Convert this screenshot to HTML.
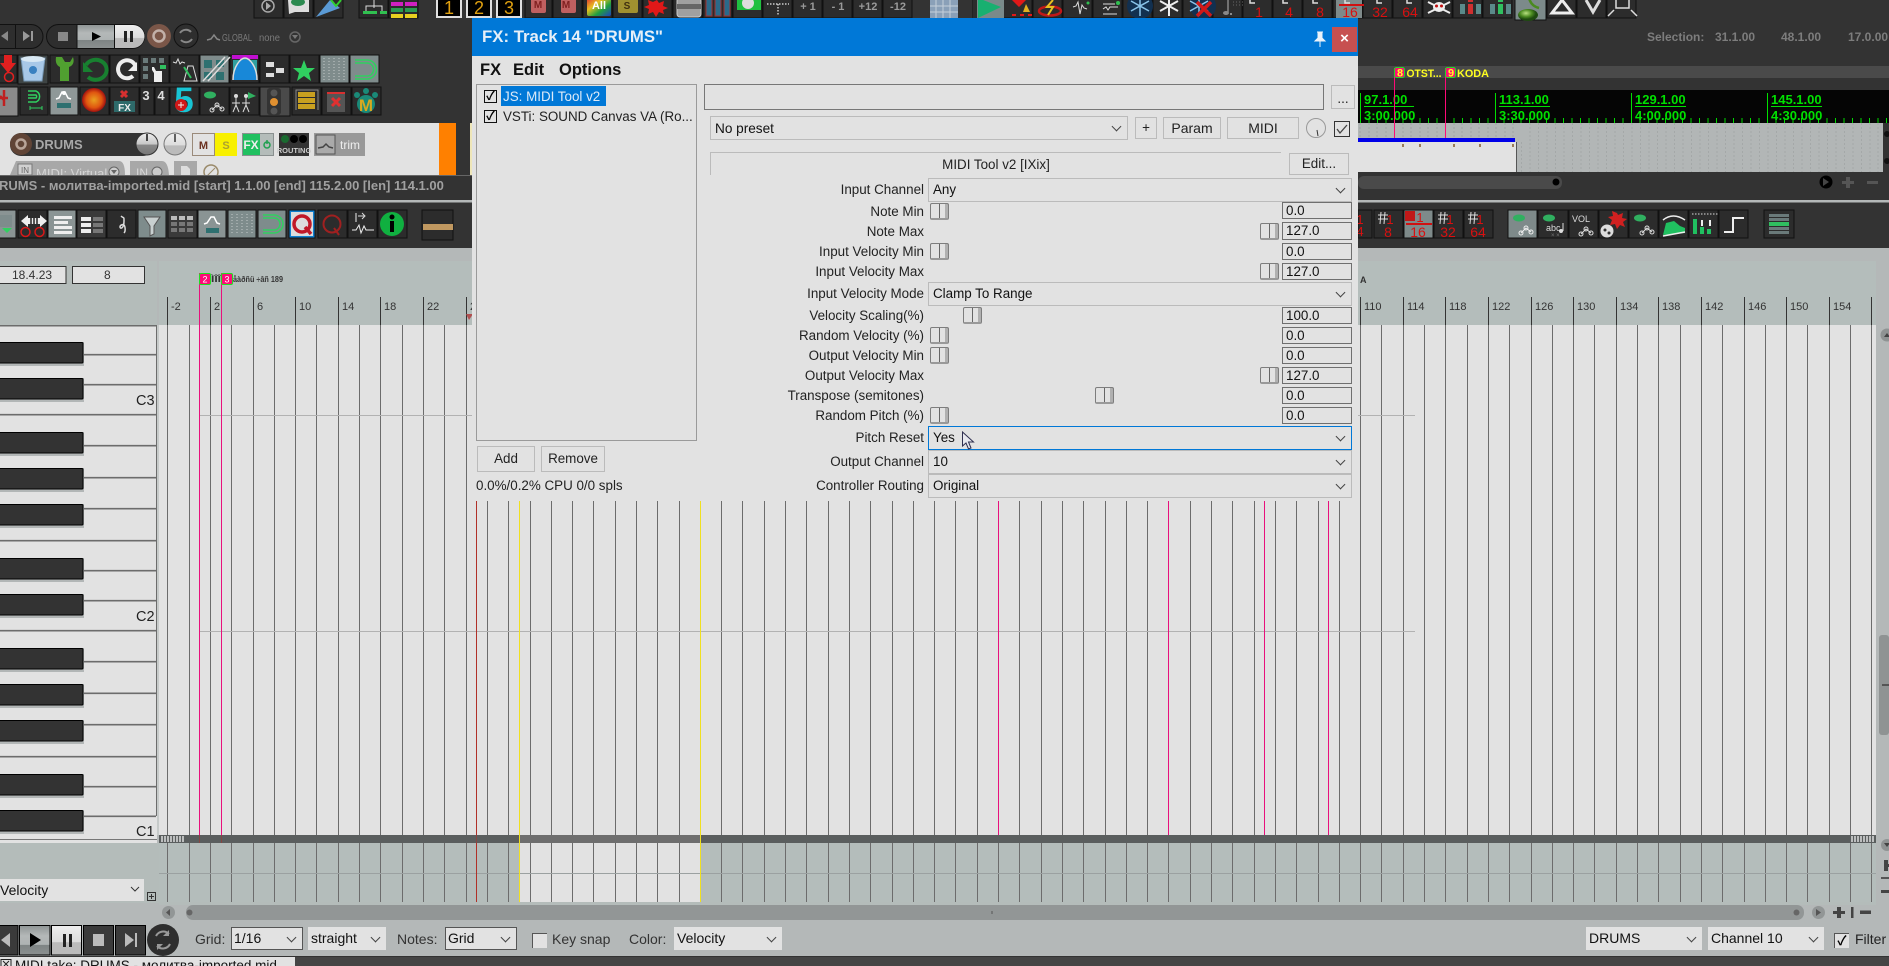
<!DOCTYPE html>
<html><head><meta charset="utf-8"><title>FX: Track 14 "DRUMS"</title>
<style>
html,body{margin:0;padding:0;width:1889px;height:966px;overflow:hidden;background:#333;font-family:"Liberation Sans","Noto Sans CJK SC",sans-serif}
.a,.cb,.ed,.kn,.bt,.lb,.s{position:absolute;box-sizing:border-box}
#base{position:absolute;left:0;top:0}
#base text{font-family:"Liberation Sans",sans-serif}
#dlg{position:absolute;left:472px;top:18px;width:886px;height:483px;background:#e2e2e2;color:#111;font-size:13.4px}
#dlg>*{margin-left:-472px;margin-top:-18px}
.lb{left:700px;width:224px;text-align:right;height:17px;line-height:17px;white-space:nowrap;color:#222}
.cb{border:1px solid #bbb;background:#e2e2e2;padding-left:4px;white-space:nowrap;border-width:1.5px}
.cb i,.s i{position:absolute;right:7px;top:50%;width:6px;height:6px;margin-top:-5px;border-right:1px solid #444;border-bottom:1px solid #444;transform:rotate(45deg)}
.ed{left:1282px;width:70px;height:17px;border:1px solid #6f6f6f;line-height:16px;padding-left:3px;background:#e2e2e2}
.kn{width:19px;height:17px;border:1px solid #7d7d7d;border-bottom:2px solid #999;border-radius:2px;background:linear-gradient(90deg,#e2e2e2 0,#e2e2e2 48%,#666 48%,#666 54%,#e2e2e2 54%,#e2e2e2 82%,#b0b0b0 82%)}
.bt{border:1px solid #bbb;text-align:center;background:#e2e2e2;color:#222;border-width:1.5px}
.chk{position:absolute;width:13px;height:13px;border:1.5px solid #111;box-sizing:border-box;background:#e2e2e2;font-size:12px;line-height:10px;text-align:center;font-weight:bold;color:#000}
.s{background:#e2e2e2;font-size:14px;line-height:22px;padding-left:3px;height:23px;top:927px;color:#111;white-space:nowrap}
.s.b{border:1px solid #555;line-height:20px;padding-left:2px}
.t{position:absolute;font-size:14px;color:#333;top:931px;white-space:nowrap;line-height:17px}
</style></head><body>
<svg id="base" width="1889" height="966" viewBox="0 0 1889 966" xmlns="http://www.w3.org/2000/svg">
<defs>
<linearGradient id="gp" x1="0" y1="0" x2="0" y2="1"><stop offset="0" stop-color="#8f9595"/><stop offset=".35" stop-color="#b4b8b8"/><stop offset=".65" stop-color="#aeb3b3"/><stop offset=".66" stop-color="#7e8484"/><stop offset="1" stop-color="#8b9090"/></linearGradient>
<linearGradient id="gk" x1="0" y1="0" x2="0" y2="1"><stop offset="0" stop-color="#eee"/><stop offset=".5" stop-color="#c8c8c8"/><stop offset=".55" stop-color="#888"/><stop offset="1" stop-color="#777"/></linearGradient>
<linearGradient id="gk2" x1="0" y1="0" x2="0" y2="1"><stop offset="0" stop-color="#eee"/><stop offset=".55" stop-color="#ddd"/><stop offset=".58" stop-color="#bbb"/><stop offset="1" stop-color="#bbb"/></linearGradient>
<radialGradient id="gsun"><stop offset="0" stop-color="#e8a020"/><stop offset=".65" stop-color="#e05510"/><stop offset="1" stop-color="#a01010"/></radialGradient>
<radialGradient id="gnote" cx=".4" cy=".35"><stop offset="0" stop-color="#b8e080"/><stop offset=".6" stop-color="#4a8a20"/><stop offset="1" stop-color="#1e4a10"/></radialGradient>
<linearGradient id="grb" x1="0" y1="0" x2="1" y2="1"><stop offset="0" stop-color="#e03030"/><stop offset=".35" stop-color="#e8c020"/><stop offset=".65" stop-color="#20a040"/><stop offset="1" stop-color="#2040c0"/></linearGradient>
<path id="g" fill="none" stroke="#6c6c6c" d="M167.5 0V510M189.5 0V510M210.5 0V510M231.5 0V510M253.5 0V510M274.5 0V510M295.5 0V510M316.5 0V510M338.5 0V510M359.5 0V510M380.5 0V510M402.5 0V510M423.5 0V510M444.5 0V510M466.5 0V510M487.5 0V510M508.5 0V510M530.5 0V510M551.5 0V510M572.5 0V510M593.5 0V510M615.5 0V510M636.5 0V510M657.5 0V510M679.5 0V510M700.5 0V510M721.5 0V510M742.5 0V510M764.5 0V510M785.5 0V510M806.5 0V510M828.5 0V510M849.5 0V510M870.5 0V510M892.5 0V510M913.5 0V510M934.5 0V510M955.5 0V510M977.5 0V510M998.5 0V510M1019.5 0V510M1041.5 0V510M1062.5 0V510M1083.5 0V510M1105.5 0V510M1126.5 0V510M1147.5 0V510M1168.5 0V510M1190.5 0V510M1211.5 0V510M1232.5 0V510M1254.5 0V510M1275.5 0V510M1296.5 0V510M1318.5 0V510M1339.5 0V510M1360.5 0V510M1381.5 0V510M1403.5 0V510M1424.5 0V510M1445.5 0V510M1467.5 0V510M1488.5 0V510M1509.5 0V510M1531.5 0V510M1552.5 0V510M1573.5 0V510M1594.5 0V510M1616.5 0V510M1637.5 0V510M1658.5 0V510M1680.5 0V510M1701.5 0V510M1722.5 0V510M1744.5 0V510M1765.5 0V510M1786.5 0V510M1807.5 0V510M1829.5 0V510M1850.5 0V510M1871.5 0V510"/>
</defs>
<!-- backgrounds -->
<rect width="1889" height="966" fill="#333"/>
<rect y="123" width="439" height="52" fill="#e2e2e2"/>
<rect x="439" y="123" width="17" height="52" fill="#ff8000"/>
<rect x="470" y="123" width="2" height="52" fill="#eee6b8"/>
<!-- arrange right -->
<rect x="1358" y="66" width="531" height="12" fill="#4a4a4a"/>
<rect x="1358" y="90" width="531" height="33" fill="#050505"/>
<rect x="1358" y="123" width="525" height="49" fill="#b2b6b6"/>
<rect x="1358" y="142" width="158" height="30" fill="#e2e2e2"/>
<rect x="1516" y="142" width="1" height="30" fill="#555"/>
<rect x="1358" y="138" width="157" height="4" fill="#0000e8"/>
<path d="M1360 123V138M1369 123V138M1377 123V138M1386 123V138M1403 123V138M1411 123V138M1420 123V138M1428 123V138M1437 123V138M1454 123V138M1462 123V138M1471 123V138M1479 123V138M1488 123V138M1496 123V138M1505 123V138M1513 123V138" stroke="#a0a4a4" stroke-dasharray="2 2"/>
<path d="M1521.500 142V172M1530 123V172M1538.500 123V172M1547 123V172M1555.500 123V172M1564 123V172M1572.500 123V172M1581 123V172M1589.500 123V172M1598 123V172M1606.500 123V172M1615 123V172M1623.500 123V172M1632 123V172M1640.500 123V172M1649 123V172M1657.500 123V172M1666 123V172M1674.500 123V172M1683 123V172M1691.500 123V172M1700 123V172M1708.500 123V172M1717 123V172M1725.500 123V172M1734 123V172M1742.500 123V172M1751 123V172M1759.500 123V172M1768 123V172M1776.500 123V172M1785 123V172M1793.500 123V172M1802 123V172M1810.500 123V172M1819 123V172M1827.500 123V172M1836 123V172M1844.500 123V172M1853 123V172M1861.500 123V172M1870 123V172M1878 123V172" stroke="#a4a8a8" stroke-dasharray="2 2"/>
<path d="M1402 144h2v3h-2zM1419 144h2v3h-2zM1453 144h2v3h-2zM1479 144h2v3h-2zM1512 144h2v3h-2z" fill="#9a7a58"/>
<circle cx="1887" cy="134" r="3" fill="#111"/><circle cx="1887" cy="161" r="3" fill="#111"/>
<rect x="1358" y="176" width="204" height="13" rx="6" fill="#4a4a4a"/>
<circle cx="1556" cy="182" r="3.500" fill="#000"/>
<circle cx="1826" cy="182" r="6.500" fill="#000"/><path d="M1823 178l6 4-6 4z" fill="#444"/>
<path d="M1846 177h4v4h4v3h-4v4h-4v-4h-4v-3h4z" fill="#555"/>
<rect x="1867" y="181" width="11" height="3" fill="#555"/>
<!-- ruler arrange -->
<path d="M1360.500 93V123M1495.500 93V123M1631.500 93V123M1767.500 93V123" stroke="#00e000"/>
<path d="M1369 118V123M1377.500 118V123M1386 118V123M1403 118V123M1412 118V123M1420 118V123M1428.500 118V123M1437 118V123M1445.500 118V123M1454 118V123M1462.500 118V123M1471 118V123M1479.500 118V123M1488 118V123M1504 118V123M1512.500 118V123M1521 118V123M1529.500 118V123M1538 118V123M1546.500 118V123M1555 118V123M1563.500 118V123M1572 118V123M1580.500 118V123M1589 118V123M1597.500 118V123M1606 118V123M1614.500 118V123M1623 118V123M1640 118V123M1648.500 118V123M1657 118V123M1665.500 118V123M1674 118V123M1682.500 118V123M1691 118V123M1699.500 118V123M1708 118V123M1716.500 118V123M1725 118V123M1733.500 118V123M1742 118V123M1750.500 118V123M1759 118V123M1776 118V123M1784.500 118V123M1793 118V123M1801.500 118V123M1810 118V123M1818.500 118V123M1827 118V123M1835.500 118V123M1844 118V123M1852.500 118V123M1861 118V123M1869.500 118V123M1878 118V123M1886.500 118V123" stroke="#00d800"/>
<g fill="#00e000" font-size="13" font-weight="bold">
<text x="1364" y="104">97.1.00</text><text x="1499" y="104">113.1.00</text><text x="1635" y="104">129.1.00</text><text x="1771" y="104">145.1.00</text>
<text x="1364" y="120">3:00.000</text><text x="1499" y="120">3:30.000</text><text x="1635" y="120">4:00.000</text><text x="1771" y="120">4:30.000</text></g>
<path d="M1364 106.500h50M1499 106.500h51M1635 106.500h51M1771 106.500h51" stroke="#00e000"/>
<!-- markers top -->
<path d="M1394.500 68V138M1445.500 68V138" stroke="#ff0a78"/>
<rect x="1394.500" y="67.500" width="10" height="10" rx="2" fill="#ff0a78" stroke="#20e020"/><rect x="1445.500" y="67.500" width="10" height="10" rx="2" fill="#ff0a78" stroke="#20e020"/>
<g font-size="11" font-weight="bold" fill="#ffff20"><text x="1397" y="76.500">8</text><text x="1448" y="76.500">9</text><text x="1406.500" y="77" textLength="35" lengthAdjust="spacingAndGlyphs">OTST...</text><text x="1457" y="77" textLength="32" lengthAdjust="spacingAndGlyphs">KODA</text></g>
<g font-size="12" font-weight="bold" fill="#7d7d7d"><text x="1647" y="41">Selection:</text><text x="1715" y="41">31.1.00</text><text x="1781" y="41">48.1.00</text><text x="1848" y="41">17.0.00</text></g>
<!-- dividers -->
<rect y="175" width="472" height="1" fill="#555"/>
<rect y="200" width="1889" height="2.500" fill="#b4b8b8"/>
<!-- midi editor background -->
<rect y="248" width="1889" height="708" fill="#b4b8b8"/>
<rect y="261" width="157" height="65" fill="#b4bcba"/>
<rect x="159" y="261" width="1717" height="64" fill="#b4bdbb"/>
<rect y="843" width="159" height="60" fill="#b4bcba"/>
<rect x="159" y="325" width="1717" height="510" fill="#e2e2e2"/>
<rect x="159" y="843" width="1717" height="59" fill="#b4bdbb"/>
<rect x="519" y="843" width="181" height="59" fill="#e2e2e2"/>
<!-- grid -->
<svg x="0" y="325" width="1876" height="510" viewBox="0 0 1876 510"><use href="#g"/></svg>
<svg x="0" y="843" width="1876" height="59" viewBox="0 0 1876 59"><use href="#g" transform="scale(1 .116)"/></svg>
<path d="M199 415.500H1415M199 631.500H1415" stroke="#b2b2b2"/>
<path d="M159 873.500H1876" stroke="#9ba1a1"/>
<path d="M167.500 297V325M210.500 297V325M253.500 297V325M295.500 297V325M338.500 297V325M380.500 297V325M423.500 297V325M466.500 297V325M1360.500 297V325M1403.500 297V325M1445.500 297V325M1488.500 297V325M1531.500 297V325M1573.500 297V325M1616.500 297V325M1658.500 297V325M1701.500 297V325M1744.500 297V325M1786.500 297V325M1829.500 297V325M1871.500 297V325" stroke="#333"/>
<g font-size="11" fill="#333"><text x="171" y="310">-2</text><text x="214" y="310">2</text><text x="257" y="310">6</text><text x="299" y="310">10</text><text x="342" y="310">14</text><text x="384" y="310">18</text><text x="427" y="310">22</text><text x="470" y="310">2</text>
<text x="1364" y="310">110</text><text x="1407" y="310">114</text><text x="1449" y="310">118</text><text x="1492" y="310">122</text><text x="1535" y="310">126</text><text x="1577" y="310">130</text><text x="1620" y="310">134</text><text x="1662" y="310">138</text><text x="1705" y="310">142</text><text x="1748" y="310">146</text><text x="1790" y="310">150</text><text x="1833" y="310">154</text></g>
<text x="1360" y="283" font-size="9" font-weight="bold" fill="#333">A</text>
<path d="M466 314h7l-4 6z" fill="#b05050"/>
<!-- coloured lines -->
<path d="M199.500 273V835M221.500 273V835M998.500 501V835M1168.500 501V835M1264.500 501V835M1328.500 501V835" stroke="#e8107c"/>
<path d="M476.500 501V902" stroke="#b03028"/>
<rect x="159" y="835" width="1717" height="8" fill="#5a5e5e"/>
<rect x="519" y="835" width="181" height="8" fill="#6e6e6e"/>
<path d="M519.500 501V902M700.500 501V902" stroke="#f0e020"/>
<path d="M476.500 835V843M199.500 835V843M221.500 835V843" stroke="#b03028" opacity=".5"/>
<path d="M161 837h23M161 839h23M161 841h23M1851 837h23M1851 839h23M1851 841h23" stroke="#ddd" stroke-dasharray="2 1" stroke-width="1.500"/>
<g font-size="8.500" fill="#333" font-weight="bold"><text x="211" y="282" textLength="10" lengthAdjust="spacingAndGlyphs">ÌÎÎ</text><text x="233" y="282" textLength="50" lengthAdjust="spacingAndGlyphs">åàðñü ÷âñ 189</text></g>
<rect x="199.500" y="273.500" width="11" height="11" rx="1.500" fill="#ff0a78" stroke="#20e020"/><rect x="221.500" y="273.500" width="11" height="11" rx="1.500" fill="#ff0a78" stroke="#20e020"/>
<g font-size="9" fill="#fff"><text x="202.500" y="282.500">2</text><text x="224.500" y="282.500">3</text></g>
<!-- piano -->
<rect y="325" width="157" height="518" fill="#e2e2e2"/>
<rect y="325" width="157" height="1.500" fill="#6c6c6c"/>
<rect x="156" y="325" width="1.500" height="491" fill="#6c6c6c"/>
<rect x="157" y="325" width="2" height="510" fill="#c6cac9"/>
<path d="M0 354.700H156M0 384.700H156M0 414.700H156M0 445.700H156M0 477.700H156M0 508.700H156M0 540.700H156M0 570.700H156M0 600.700H156M0 630.700H156M0 661.700H156M0 693.300H156M0 724.700H156M0 756.700H156M0 786.700H156M0 816.300H156" stroke="#6c6c6c" stroke-width="1.600"/>
<path d="M0 839.500H157" stroke="#777"/>
<rect y="843" width="159" height="2" fill="#b4bcba"/>
<g fill="#b2b6b6"><rect y="342" width="84" height="24"/><rect y="378" width="84" height="24"/><rect y="432" width="84" height="24"/><rect y="468" width="84" height="24"/><rect y="504" width="84" height="24"/><rect y="558" width="84" height="24"/><rect y="594" width="84" height="24"/><rect y="648" width="84" height="24"/><rect y="684" width="84" height="24"/><rect y="720" width="84" height="24"/><rect y="774" width="84" height="24"/><rect y="810" width="84" height="24"/></g>
<g fill="#333" stroke="#000"><rect x="-2" y="342.500" width="85" height="20.500" rx="1"/><rect x="-2" y="378.500" width="85" height="20.500" rx="1"/><rect x="-2" y="432.500" width="85" height="20.500" rx="1"/><rect x="-2" y="468.500" width="85" height="20.500" rx="1"/><rect x="-2" y="504.500" width="85" height="20.500" rx="1"/><rect x="-2" y="558.500" width="85" height="20.500" rx="1"/><rect x="-2" y="594.500" width="85" height="20.500" rx="1"/><rect x="-2" y="648.500" width="85" height="20.500" rx="1"/><rect x="-2" y="684.500" width="85" height="20.500" rx="1"/><rect x="-2" y="720.500" width="85" height="20.500" rx="1"/><rect x="-2" y="774.500" width="85" height="20.500" rx="1"/><rect x="-2" y="810.500" width="85" height="20.500" rx="1"/></g>
<g font-size="14.500" fill="#222"><text x="136" y="405">C3</text><text x="136" y="621">C2</text><text x="136" y="836">C1</text></g>
<!-- midi header inputs -->
<rect x="-2" y="266.500" width="68" height="17" fill="#e2e2e2" stroke="#333"/><rect x="72.500" y="266.500" width="72" height="17" fill="#e2e2e2" stroke="#333"/>
<g font-size="12" fill="#333"><text x="12" y="279">18.4.23</text><text x="104" y="279">8</text></g>
<!-- velocity dropdown -->
<rect y="879" width="144" height="22" fill="#e2e2e2"/><text x="0" y="895" font-size="14" fill="#111">Velocity</text>
<path d="M131 887l4 4 4-4" fill="none" stroke="#333"/>
<rect x="147.500" y="892.500" width="8" height="8" fill="none" stroke="#333"/><path d="M149 896.500h5M151.500 894v5" stroke="#333"/>
<!-- horizontal scrollbar -->
<rect x="159" y="902" width="1717" height="3" fill="#b4bcba"/>
<rect x="186" y="905" width="1618" height="15" rx="7" fill="#929696"/>
<circle cx="168.500" cy="912.500" r="6.500" fill="#929696"/><path d="M170 909v7l-4-3.500z" fill="#555"/>
<circle cx="189.500" cy="912.500" r="3" fill="#666"/>
<circle cx="1796.500" cy="912.500" r="3" fill="#666"/>
<circle cx="1818.500" cy="912.500" r="6.500" fill="#929696"/><path d="M1816 909v7l5-3.500z" fill="#555"/>
<path d="M1837 907h4v4h4v3h-4v4h-4v-4h-4v-3h4z" fill="#444"/><rect x="1851" y="907" width="2.500" height="11" fill="#444"/><rect x="1860" y="910.500" width="11" height="3.500" fill="#444"/>
<path d="M992 911V914" stroke="#555"/>
<!-- right strip -->
<circle cx="1887" cy="335" r="6.500" fill="#8f9393"/><path d="M1884 337l3-4 3 4z" fill="#444"/>
<rect x="1879" y="635" width="10" height="100" rx="3" fill="#8f9393"/><rect x="1882" y="684" width="7" height="2" fill="#555"/>
<circle cx="1887" cy="845" r="6" fill="#8f9393"/><path d="M1884 843l3 4 3-4z" fill="#444"/>
<path d="M1884 860h4v4h1v3h-1v4h-4z" fill="#444"/><rect x="1881" y="877" width="8" height="2" fill="#555"/><rect x="1881" y="890" width="8" height="3" fill="#444"/>
<!-- bottom transport -->
<g stroke="#000"><rect x="-2" y="925.500" width="20" height="29.500" fill="#3a3a3a"/><rect x="19.500" y="925.500" width="30.500" height="29.500" fill="url(#gp)"/><rect x="51.500" y="925.500" width="30" height="29.500" fill="url(#gk2)"/><rect x="83.500" y="925.500" width="30" height="29.500" fill="#3a3a3a"/><rect x="115.500" y="925.500" width="30" height="29.500" fill="#3a3a3a"/></g>
<path d="M10 933v14l-9-7z" fill="#bbb"/><path d="M30 933l11 7-11 7z" fill="#000"/><path d="M63 934h3v13h-3zM69 934h3v13h-3z" fill="#222"/><rect x="93" y="934" width="11" height="12" fill="#bbb"/><path d="M125 933l9 7-9 7zM135 933h2v14h-2z" fill="#bbb"/>
<circle cx="163" cy="940" r="16" fill="#2e2e2e"/><path d="M156 936a8 8 0 0 1 13-2M170 944a8 8 0 0 1-13 2" fill="none" stroke="#999" stroke-width="2"/><path d="M169 930v6h-6zM157 950v-6h6z" fill="#999"/>
<!-- bottom status -->
<rect y="957" width="1889" height="9" fill="#454545"/>
<rect y="957" width="295" height="9" fill="#e2e2e2"/>
<path d="M1 966V959.500H11V966" fill="none" stroke="#222"/><path d="M3 961l5 5M9 961l-5 5" stroke="#222"/>

<!-- TOP TOOLBAR ROW 0 -->
<g fill="#2c2c2c" stroke="#111"><rect x="254" y="-2" width="29" height="20"/><rect x="284" y="-2" width="29" height="20"/><rect x="314" y="-2" width="29" height="20"/><rect x="359" y="-2" width="29" height="20"/><rect x="389" y="-2" width="29" height="20"/>
<rect x="525" y="-2" width="27" height="20"/><rect x="553" y="-2" width="29" height="20"/><rect x="583" y="-2" width="29" height="20"/><rect x="613" y="-2" width="29" height="20"/><rect x="643" y="-2" width="29" height="20"/><rect x="673" y="-2" width="29" height="20"/><rect x="703" y="-2" width="29" height="20"/><rect x="733" y="-2" width="29" height="20"/><rect x="763" y="-2" width="29" height="20"/><rect x="793" y="-2" width="29" height="20"/><rect x="823" y="-2" width="29" height="20"/><rect x="853" y="-2" width="29" height="20"/><rect x="883" y="-2" width="29" height="20"/><rect x="973" y="-2" width="29" height="20"/><rect x="1003" y="-2" width="29" height="20"/><rect x="1033" y="-2" width="29" height="20"/><rect x="1063" y="-2" width="29" height="20"/><rect x="1093" y="-2" width="29" height="20"/><rect x="1123" y="-2" width="29" height="20"/><rect x="1153" y="-2" width="29" height="20"/><rect x="1183" y="-2" width="29" height="20"/><rect x="1213" y="-2" width="29" height="20"/><rect x="1243" y="-2" width="29" height="20"/><rect x="1273" y="-2" width="29" height="20"/><rect x="1303" y="-2" width="29" height="20"/><rect x="1333" y="-2" width="29" height="20"/><rect x="1363" y="-2" width="29" height="20"/><rect x="1393" y="-2" width="29" height="20"/><rect x="1423" y="-2" width="29" height="20"/><rect x="1453" y="-2" width="29" height="20"/><rect x="1483" y="-2" width="29" height="20"/><rect x="1515" y="-2" width="31" height="20"/><rect x="1547" y="-2" width="29" height="20"/><rect x="1577" y="-2" width="29" height="20"/><rect x="1607" y="-2" width="29" height="20"/></g>
<circle cx="268" cy="6" r="6" fill="none" stroke="#aaa" stroke-width="1.500"/><path d="M266 2l5 4-5 4z" fill="#aaa"/>
<path d="M288 0h21v12h-14l-6 2z" fill="#ddd"/><ellipse cx="298" cy="2" rx="7" ry="4" fill="#2c8a50"/>
<path d="M316 17l24-9-10-8z" fill="#5a9ad5"/><path d="M331 0l5 6 5-6" fill="none" stroke="#30d030" stroke-width="2"/>
<rect x="363" y="11" width="7" height="3" fill="#30c050"/><rect x="370" y="11" width="7" height="3" fill="#30c050"/><rect x="380" y="11" width="7" height="3" fill="#30c050"/><path d="M374 0v8M366 11V6h16v5" stroke="#ddd" fill="none"/>
<g fill="#d020c0"><rect x="391" y="2" width="12" height="4"/><rect x="405" y="2" width="12" height="4"/></g><g fill="#2a9a50"><rect x="391" y="8" width="12" height="4"/><rect x="405" y="8" width="12" height="4"/></g><g fill="#e8d020"><rect x="391" y="14" width="12" height="4"/><rect x="405" y="14" width="12" height="4"/></g>
<g fill="#000" stroke="#e0e0e0" stroke-width="2"><rect x="437" y="-2" width="24" height="19"/><rect x="467" y="-2" width="24" height="19"/><rect x="497" y="-2" width="24" height="19"/></g>
<g font-size="18" fill="#e0a010" text-anchor="middle"><text x="449" y="14">1</text><text x="479" y="14">2</text><text x="509" y="14">3</text></g>
<rect x="531" y="-2" width="15" height="15" rx="2" fill="#c06060"/><rect x="561" y="-2" width="15" height="15" rx="2" fill="#c06060"/><rect x="618" y="-2" width="20" height="15" rx="2" fill="#a09030"/>
<rect x="587" y="-2" width="24" height="18" rx="2" fill="url(#grb)"/>
<g font-size="10" font-weight="bold" text-anchor="middle"><text x="538" y="8" fill="#802020">M</text><text x="566" y="8" fill="#802020">M</text><text x="627" y="9" fill="#403010">S</text><text x="599" y="9" fill="#fff" font-size="11">All</text></g>
<path d="M657 0l2 3 5-2-1 5 5 2-5 2 1 4-5-2-3 5-3-5-5 2 1-5-5-2 5-2-1-5 5 2z" fill="#e01818"/>
<rect x="677" y="-2" width="24" height="19" rx="3" fill="#a0a0a0" stroke="#ccc"/><rect x="677" y="4" width="24" height="5" fill="#666"/>
<g fill="#2a6a8a" stroke="#a03030"><rect x="706" y="-2" width="6" height="18"/><rect x="715" y="-2" width="6" height="18"/><rect x="724" y="-2" width="6" height="18"/></g>
<rect x="737" y="-2" width="24" height="12" fill="#20c040"/><circle cx="748" cy="3" r="6" fill="#ddd"/>
<path d="M767 4h22M778 4v11" stroke="#ccc" stroke-dasharray="1.500 1.500" stroke-width="1.500"/>
<g font-size="11" fill="#9a9a9a" text-anchor="middle" font-weight="bold"><text x="808" y="10">+ 1</text><text x="838" y="10">- 1</text><text x="868" y="10">+12</text><text x="898" y="10">-12</text></g>
<rect x="930" y="-2" width="28" height="20" fill="#8aa0b8"/>
<path d="M936 0v18M943 0v18M950 0v18M930 6h28M930 12h28" stroke="#c4cfda"/>
<rect x="973" y="-2" width="29" height="20" fill="#2c2c2c"/><rect x="977" y="-2" width="27" height="20" fill="#7a8a8a"/><path d="M978 18V-2l23 9z" fill="#18b070"/>
<path d="M1012 0l7 7 7-7zM1012 14h4v2h-4zM1020 14h4v2h-4zM1028 14h4v2h-4z" fill="#e01818"/><path d="M1026 4l4 8h-7z" fill="#e0b020"/>
<ellipse cx="1050" cy="11" rx="11" ry="4.500" fill="none" stroke="#c01818" stroke-width="2.500"/><path d="M1053 0l-6 7h6l-5 8" fill="none" stroke="#e8c020" stroke-width="2"/>
<path d="M1073 7l3-1 2-4 2 12 2-9 2 3 3 1" fill="none" stroke="#ddd"/><circle cx="1088" cy="3" r="1.500" fill="#30c050"/>
<path d="M1103 4h12M1103 9l3-2 2 3 2-3 8 0M1103 14h14" fill="none" stroke="#ddd"/><circle cx="1118" cy="3" r="2" fill="#30c050"/>
<circle cx="1140" cy="6" r="13" fill="#123050"/><circle cx="1203" cy="6" r="13" fill="#123050"/>
<g stroke="#8ac4ea" stroke-width="1.500"><path d="M1140 -4v20M1131 1l18 10M1149 1l-18 10"/><path d="M1199 -4v20M1190 1l18 10M1208 1l-18 10"/></g>
<path d="M1169 -4v20M1160 1l18 10M1178 1l-18 10" stroke="#eee" stroke-width="2"/>
<path d="M1197 2l14 14M1211 2l-14 14" stroke="#d01818" stroke-width="3.500"/>
<path d="M1228 0v12" stroke="#888" stroke-width="1.500"/><ellipse cx="1226" cy="13" rx="3" ry="2" fill="#888"/><circle cx="1231" cy="14" r="1" fill="#aaa"/><path d="M1233 2h10M1233 5h10" stroke="#666" stroke-dasharray="1 2"/>
<rect x="1336" y="-2" width="26" height="20" fill="#7e8a8a"/>
<path d="M1339 5h25" stroke="#d01010" stroke-width="2"/>
<path d="M1250 0v3h5M1283 0v3h5M1313 0v3h5M1345 0v3h5M1377 0v3h5M1407 0v3h5" stroke="#ddd" stroke-width="1.500" fill="none"/>
<g font-size="14" fill="#d81010" text-anchor="middle"><text x="1259" y="17">1</text><text x="1289" y="17">4</text><text x="1320" y="17">8</text><text x="1350" y="17">16</text><text x="1380" y="17">32</text><text x="1410" y="17">64</text></g>
<ellipse cx="1439" cy="7" rx="6" ry="5" fill="#eee"/><path d="M1428 2l22 11M1450 2l-22 11" stroke="#eee" stroke-width="2"/><circle cx="1436.500" cy="6" r="1.500" fill="#c01010"/><circle cx="1441.500" cy="6" r="1.500" fill="#c01010"/>
<g fill="#5a8a8a"><rect x="1460" y="4" width="5" height="10"/><rect x="1476" y="4" width="5" height="10"/><rect x="1490" y="4" width="5" height="10"/><rect x="1506" y="4" width="5" height="10"/></g><rect x="1468" y="4" width="5" height="10" fill="#d03030"/><rect x="1498" y="4" width="5" height="10" fill="#30c060"/><rect x="1468" y="0" width="5" height="2" fill="#d03030"/><rect x="1498" y="0" width="5" height="2" fill="#30c060"/>
<rect x="1515" y="-2" width="31" height="22" fill="#7c8a8a" stroke="#111"/><ellipse cx="1528" cy="15" rx="10" ry="6" fill="url(#gnote)"/><path d="M1529 -2q2 8 10 10" fill="none" stroke="#4a8a20" stroke-width="2.500"/>
<path d="M1562 0l-10 13h20zM1562 0l-6 8" fill="none" stroke="#eee" stroke-width="3"/>
<path d="M1586 0l7 12 7-12" fill="none" stroke="#ddd" stroke-width="3"/>
<rect x="1616" y="-2" width="13" height="10" fill="none" stroke="#ddd" stroke-width="1.500"/><path d="M1614 10l-6 6M1631 10l6 6" stroke="#ddd" stroke-width="1.500"/>

<!-- transport -->
<rect x="-14" y="24.500" width="57" height="24" rx="12" fill="#2e2e2e" stroke="#111"/>
<path d="M8 31v10l-7-5z" fill="#888"/><path d="M23 31l7 5-7 5zM31 31h2v10h-2z" fill="#999"/><path d="M15.500 25v23" stroke="#111"/>
<rect x="46.500" y="24.500" width="98" height="24" rx="12" fill="#2e2e2e" stroke="#111"/>
<rect x="77" y="25" width="37" height="23" fill="url(#gp)"/>
<path d="M115 25h18a11.500 11.500 0 0 1 0 23h-18z" fill="url(#gk2)"/>
<path d="M77 25V48M114.500 25V48" stroke="#111"/>
<rect x="58" y="32" width="10" height="9" fill="#888"/><path d="M92 32l9 4.500-9 4.500z" fill="#000"/><path d="M124 31h3v11h-3zM130 31h3v11h-3z" fill="#222"/>
<circle cx="159" cy="36" r="12" fill="#7a5648"/><circle cx="159" cy="36" r="5.500" fill="none" stroke="#c2b0a8" stroke-width="2.500"/>
<circle cx="186" cy="36" r="12" fill="#2e2e2e" stroke="#111"/><path d="M180 33a7 7 0 0 1 11-1M192 39a7 7 0 0 1-11 1" fill="none" stroke="#888" stroke-width="2"/>
<path d="M207 40l4-1 3-4 3 4 3 1" fill="none" stroke="#888" stroke-width="1.500"/>
<g font-size="10" fill="#7a7a7a"><text x="222" y="41" textLength="30" lengthAdjust="spacingAndGlyphs">GLOBAL</text><text x="259" y="41" textLength="21" lengthAdjust="spacingAndGlyphs">none</text></g>
<circle cx="295" cy="37" r="5" fill="none" stroke="#666" stroke-width="1.500"/><path d="M292 35h6l-3 4z" fill="#777"/>

<!-- ROW 1 -->
<g fill="#2c2c2c" stroke="#111"><rect x="-2" y="55" width="19" height="28"/><rect x="18" y="55" width="30" height="29" fill="#3e4444"/><rect x="50" y="55" width="29" height="28"/><rect x="80" y="55" width="29" height="28"/><rect x="110" y="55" width="29" height="28"/><rect x="140" y="55" width="29" height="28"/><rect x="170" y="55" width="29" height="28"/><rect x="200" y="55" width="29" height="28" fill="#7f8c8c"/><rect x="230" y="55" width="29" height="28"/><rect x="260" y="55" width="29" height="28"/><rect x="290" y="55" width="29" height="28"/><rect x="320" y="55" width="29" height="28" fill="#7f8c8c"/><rect x="350" y="55" width="29" height="28" fill="#7f8c8c"/></g>
<path d="M4 55h8v8h4l-8 10-8-10h4z" fill="#e02020"/><circle cx="9" cy="77" r="4.500" fill="none" stroke="#e02020" stroke-width="1.500"/>
<path d="M21 58h24l-3 23H24z" fill="#a8c8e8" stroke="#789ab8"/><ellipse cx="33" cy="59" rx="12" ry="3" fill="#d8e8f4"/><circle cx="33" cy="70" r="4" fill="#3a80c0"/>
<path d="M56 57c-1 7 2 9 4 10v14h9V67c3-1 6-4 4-10l-3 5-5 0-3-5z" fill="#50a030"/>
<path d="M86 65a11 10 0 1 1 2 12" fill="none" stroke="#188030" stroke-width="4"/><path d="M83 62v10h10z" fill="#188030"/>
<path d="M135 65a9 9 0 1 0-2 11" fill="none" stroke="#eee" stroke-width="4"/><path d="M137 62v9h-9z" fill="#eee"/>
<g fill="#6a7a7a"><rect x="143" y="58" width="5" height="5"/><rect x="151" y="58" width="5" height="5"/><rect x="159" y="58" width="5" height="5"/><rect x="143" y="66" width="5" height="5"/><rect x="143" y="74" width="5" height="5"/></g><rect x="160" y="65" width="6" height="4" fill="#30c060"/><path d="M154 82v-9l-2-3v-3h2l2 4h6v11z" fill="#eee"/>
<path d="M173 62l3 1 2-4 2 5 2-2 3 1" fill="none" stroke="#ddd"/><path d="M184 81h13l-4-15h-5z" fill="none" stroke="#ddd"/><path d="M184 67l7 11" stroke="#30c060" stroke-width="2"/>
<g fill="#2e7070"><rect x="204" y="60" width="8" height="8"/><rect x="216" y="72" width="8" height="8"/><rect x="204" y="72" width="8" height="7"/><rect x="216" y="60" width="8" height="7"/></g><path d="M203 81l22-24M208 81l22-24" stroke="#ddd" stroke-width="1.500"/>
<rect x="232" y="55" width="26" height="4" fill="#c010d0"/><path d="M233 80c0-14 8-22 12-22s12 8 12 22z" fill="#1888d8"/><path d="M233 60h24v20c-1-12-6-22-12-22s-11 10-12 22z" fill="#30a0a0"/><path d="M233 80c0-14 8-22 12-22s12 8 12 22" fill="none" stroke="#ddd" stroke-width="1.500"/>
<path d="M266 62h8v5h-8zM276 68h8v5h-8zM266 73h8v4h-8z" fill="#ddd"/>
<path d="M304 60l3 8 8 0-6 5 2 8-7-5-7 5 2-8-6-5 8 0z" fill="#30d060"/>
<path d="M324 58v23M329 58v23M334 58v23M339 58v23M344 58v23" stroke="#c4caca" stroke-dasharray="1 2"/>
<path d="M355 60h12a8 8 0 0 1 0 19h-12" fill="none" stroke="#30d060" stroke-width="1.500"/><path d="M355 63h12a5 5 0 0 1 0 13h-12" fill="none" stroke="#30d060" stroke-width="1.500"/>

<!-- ROW 2 -->
<g fill="#2c2c2c" stroke="#111"><rect x="-2" y="87" width="20" height="29" fill="#8a8a8a"/><rect x="20" y="87" width="28" height="28"/><rect x="50" y="87" width="28" height="28" fill="#8f9898"/><rect x="80" y="87" width="29" height="28"/><rect x="110" y="87" width="29" height="28"/><rect x="140" y="87" width="14" height="28"/><rect x="155" y="87" width="14" height="28"/><rect x="170" y="87" width="29" height="28"/><rect x="200" y="87" width="29" height="28"/><rect x="230" y="87" width="29" height="28"/><rect x="260" y="87" width="30" height="29" fill="#4a4a4a"/><rect x="292" y="87" width="29" height="28"/><rect x="322" y="87" width="29" height="28"/><rect x="352" y="87" width="29" height="28"/></g>
<path d="M4 90v16M0 98h8M4 100l-4-4" stroke="#c02020" stroke-width="2.500" fill="none"/>
<path d="M28 91h8a6 6 0 0 1 0 11h-8M28 95h8a2 2 0 0 1 0 3h-8" fill="none" stroke="#30d060" stroke-width="1.500"/><path d="M30 108h12M30 106v4M42 106v4" stroke="#30d060"/>
<g fill="none" stroke="#fff" stroke-width="1.500"><path d="M56 99l3-1 3-6 3 0 3 6 3 1"/></g><g fill="#fff"><circle cx="64" cy="93" r="2"/></g><rect x="57" y="103" width="14" height="5" fill="#2e7070"/>
<circle cx="94" cy="100" r="12" fill="url(#gsun)"/>
<path d="M121 91l6 6M127 91l-6 6" stroke="#d83030" stroke-width="3"/><rect x="114" y="101" width="21" height="11" fill="#2e6a6a"/><text x="124.500" y="111" font-size="10" font-weight="bold" fill="#eee" text-anchor="middle">FX</text>
<g font-size="13" font-weight="bold" fill="#ddd" text-anchor="middle"><text x="146" y="100">3</text><text x="161" y="100">4</text></g>
<text x="184" y="112" font-size="35" font-weight="bold" fill="#18c4d4" text-anchor="middle">5</text><circle cx="181" cy="105" r="6" fill="#d01818"/><path d="M181 102v6M178 105h6" stroke="#eee"/>
<ellipse cx="210" cy="95" rx="6" ry="3.500" fill="#30b060"/><path d="M212 110l5-5 5 4" fill="none" stroke="#ddd"/><circle cx="212" cy="110" r="2" fill="none" stroke="#ddd"/><circle cx="217" cy="105" r="2" fill="none" stroke="#ddd"/><circle cx="222" cy="109" r="2" fill="none" stroke="#ddd"/>
<circle cx="236" cy="96" r="2" fill="#ddd"/><circle cx="246" cy="96" r="2" fill="#ddd"/><path d="M236 98v7l-3 7M236 105l3 7M246 98v7l-3 7M246 105l3 7M232 103h8M242 103h8" stroke="#ddd" fill="none"/><path d="M248 92l8 4-8 3z" fill="#30b060"/>
<rect x="267" y="88" width="14" height="27" rx="3" fill="#333"/><circle cx="274" cy="93" r="3.500" fill="#555"/><circle cx="274" cy="102" r="4" fill="#e09030"/><circle cx="274" cy="111" r="3.500" fill="#555"/>
<g fill="#c8a020"><rect x="298" y="92" width="17" height="5"/><rect x="298" y="98" width="17" height="5"/><rect x="298" y="104" width="17" height="5"/></g><path d="M296 110V90h22v20" fill="none" stroke="#888"/>
<rect x="327" y="92" width="18" height="20" fill="#555"/><rect x="327" y="92" width="18" height="2" fill="#d83030"/><path d="M332 98l8 8M340 98l-8 8" stroke="#e03030" stroke-width="3"/>
<circle cx="366" cy="104" r="9" fill="#1a8a78"/><circle cx="357" cy="95" r="3" fill="#1a8a78"/><circle cx="366" cy="91" r="3" fill="#1a8a78"/><circle cx="375" cy="95" r="3" fill="#1a8a78"/><text x="366" y="111" font-size="17" font-weight="bold" fill="#d8a820" text-anchor="middle">M</text>

<!-- track panel -->
<rect x="10" y="133" width="144" height="23" rx="11" fill="#333"/>
<circle cx="21" cy="144" r="11" fill="#604436"/><circle cx="21" cy="144" r="4.500" fill="none" stroke="#b8a498" stroke-width="2.500"/>
<text x="35" y="149" font-size="13" font-weight="bold" fill="#a8a8a8">DRUMS</text>
<circle cx="147" cy="144" r="11" fill="url(#gk)" stroke="#333"/><path d="M147 134v7" stroke="#111" stroke-width="1.500"/>
<circle cx="175" cy="144" r="11" fill="url(#gk2)" stroke="#777"/><path d="M175 134v8" stroke="#333" stroke-width="1.500"/>
<rect x="192.500" y="133.500" width="22" height="22" fill="#e2e2e2" stroke="#9a8a7a"/><rect x="215" y="133" width="22" height="23" fill="#f8f000"/><rect x="236.500" y="133.500" width="0" height="22" stroke="#9a9a50"/>
<text x="203.500" y="149" font-size="11" font-weight="bold" fill="#6a3020" text-anchor="middle">M</text><text x="226" y="149" font-size="11" font-weight="bold" fill="#aaa030" text-anchor="middle">S</text>
<rect x="242" y="133" width="18" height="23" fill="#20c060"/><rect x="260" y="133" width="14" height="23" fill="#b4bcba"/><rect x="242.500" y="133.500" width="31" height="22" fill="none" stroke="#8a9090"/>
<text x="251" y="149" font-size="12" font-weight="bold" fill="#eee" text-anchor="middle">FX</text>
<circle cx="267" cy="145" r="3" fill="none" stroke="#20a050" stroke-width="1.500"/><path d="M267 140v4" stroke="#20a050" stroke-width="1.500"/>
<rect x="279" y="133" width="30" height="23" fill="#333"/><circle cx="285" cy="139" r="4" fill="#1a6a30"/><circle cx="294" cy="139" r="4" fill="#000"/><circle cx="303" cy="139" r="4" fill="#000"/>
<text x="294" y="153" font-size="7.500" font-weight="bold" fill="#ccc" text-anchor="middle">ROUTING</text>
<rect x="314" y="133" width="51" height="23" fill="#999"/><rect x="316" y="135" width="19" height="19" fill="#aaa" stroke="#555"/><path d="M318 148l5-1 3-3 3 3 4 1" fill="none" stroke="#444" stroke-width="1.500"/>
<text x="340" y="149" font-size="12" fill="#eee">trim</text>
<path d="M10 175l6-14h103q6 0 6 14z" fill="#a8a8a8"/><rect x="18" y="164" width="14" height="11" fill="#d0d0d0" stroke="#777"/><text x="25" y="173" font-size="8" fill="#666" text-anchor="middle">IN</text>
<text x="36" y="178" font-size="13" fill="#d4d4d4">MIDI: Virtual</text>
<circle cx="114" cy="172" r="5" fill="#ccc" stroke="#666"/><path d="M111 170h6l-3 4z" fill="#666"/>
<path d="M130 161h32q6 0 7 14h-39z" fill="#a8a8a8"/><text x="136" y="177" font-size="12" fill="#d8d8d8">IN</text><circle cx="157" cy="172" r="5" fill="#ccc" stroke="#666"/>
<rect x="174" y="161" width="23" height="14" fill="#a8a8a8"/><path d="M181 175v-9h6l3 3v6z" fill="#ddd"/>
<circle cx="211" cy="172" r="7" fill="none" stroke="#9a8a6a" stroke-width="1.500"/><path d="M207 176l8-8" stroke="#9a8a6a"/>
<rect y="175" width="472" height="1" fill="#666"/>
<rect y="176" width="472" height="24" fill="#333"/>
<text x="-1" y="190" font-size="13" font-weight="bold" fill="#a0a0a0">RUMS - молитва-imported.mid [start] 1.1.00 [end] 115.2.00 [len] 114.1.00</text>

<!-- second toolbar row left -->
<g fill="#2c2c2c" stroke="#111"><rect x="-2" y="210" width="18" height="28" fill="#8a9494"/><rect x="18" y="210" width="29" height="28"/><rect x="48" y="210" width="28" height="28" fill="#8a9494"/><rect x="77" y="210" width="29" height="28" fill="#3a3a3a"/><rect x="107" y="210" width="29" height="28"/><rect x="138" y="210" width="28" height="28" fill="#7e8c8c"/><rect x="168" y="210" width="29" height="28" fill="#3a3a3a"/><rect x="198" y="210" width="28" height="28" fill="#8a9494"/><rect x="228" y="210" width="28" height="28" fill="#7e8c8c"/><rect x="258" y="210" width="28" height="28" fill="#7e8c8c"/><rect x="289" y="210" width="26" height="28" fill="#1080d0"/><rect x="318" y="210" width="29" height="28"/><rect x="348" y="210" width="29" height="28"/><rect x="378" y="210" width="29" height="28"/><rect x="422" y="210" width="31" height="30"/></g>
<path d="M0 215h12v12h-12z" fill="#7e8c8c"/><path d="M2 228l5 5 5-5z" fill="#30d060"/>
<path d="M21 221l7-6v3h12v-3l7 6-7 6v-3H28v3z" fill="#eee"/><path d="M30 218h2v6h-2zM33 218h2v6h-2zM36 218h2v6h-2z" fill="#555"/>
<circle cx="25.500" cy="232" r="4.500" fill="none" stroke="#d81818" stroke-width="1.500"/><circle cx="39.500" cy="232" r="4.500" fill="none" stroke="#d81818" stroke-width="1.500"/>
<path d="M54 216h18v3h-18zM54 221h14v3h-14zM54 226h18v3h-18zM54 231h18v3h-18z" fill="#eee"/>
<g fill="#eee"><rect x="81" y="217" width="10" height="4"/><rect x="81" y="223" width="10" height="4"/><rect x="81" y="229" width="10" height="4"/></g><g fill="#777"><rect x="93" y="217" width="10" height="4"/><rect x="93" y="223" width="10" height="4"/><rect x="93" y="229" width="10" height="4"/></g>
<path d="M121 216c3 3 3 0 3 5 0 8-4 8-4 6s3-3 4-2 2 6 0 8" fill="none" stroke="#ddd" stroke-width="1.500"/>
<path d="M144 217h16l-6 9v8l-4 2v-10z" fill="#c8d0d0" stroke="#555"/>
<g fill="#bbb"><rect x="171" y="216" width="6" height="4"/><rect x="179" y="216" width="6" height="4"/><rect x="187" y="216" width="6" height="4"/></g><g fill="#777"><rect x="171" y="222" width="6" height="4"/><rect x="179" y="222" width="6" height="4"/><rect x="187" y="222" width="6" height="4"/><rect x="171" y="228" width="6" height="4"/><rect x="179" y="228" width="6" height="4"/><rect x="187" y="228" width="6" height="4"/></g>
<path d="M204 224l3-1 4-6 3 0 3 6 3 1" fill="none" stroke="#fff" stroke-width="1.500"/><rect x="206" y="228" width="13" height="5" fill="#2e7070"/>
<path d="M232 214v21M237 214v21M242 214v21M247 214v21M252 214v21" stroke="#c4caca" stroke-dasharray="1 2"/>
<path d="M263 215h11a8 8 0 0 1 0 18h-11M263 218h11a5 5 0 0 1 0 12h-11" fill="none" stroke="#30d060" stroke-width="1.500"/>
<rect x="291" y="212" width="22" height="24" fill="#ddd"/><circle cx="302" cy="224" r="8" fill="none" stroke="#c01828" stroke-width="3.500"/><path d="M305 227l6 7" stroke="#c01828" stroke-width="3.500"/>
<circle cx="332" cy="224" r="8.500" fill="none" stroke="#a02020" stroke-width="2"/><path d="M334 228l5 7" stroke="#a02020" stroke-width="2"/>
<path d="M352 230l4 0 3-5 2 8 3-7 2 4 8 0M356 213v9" fill="none" stroke="#eee"/><path d="M358 216h6M362 213l3 3-3 3" fill="none" stroke="#ddd"/>
<circle cx="392" cy="224" r="12" fill="#10b040"/><circle cx="392" cy="217" r="2.500" fill="#000"/><rect x="390" y="221" width="4" height="11" fill="#000"/>
<rect x="423" y="224" width="30" height="6" fill="#c09860"/>
<!-- second toolbar right -->
<g fill="#2c2c2c" stroke="#111"><rect x="1358" y="210" width="14" height="28"/><rect x="1374" y="210" width="29" height="28"/><rect x="1404" y="210" width="29" height="28" fill="#7e8a8a"/><rect x="1434" y="210" width="29" height="28"/><rect x="1464" y="210" width="29" height="28"/><rect x="1508" y="210" width="29" height="28" fill="#7e8a8a"/><rect x="1538" y="210" width="30" height="28"/><rect x="1569" y="210" width="29" height="28"/><rect x="1599" y="210" width="29" height="28"/><rect x="1629" y="210" width="29" height="28"/><rect x="1659" y="210" width="29" height="28"/><rect x="1689" y="210" width="29" height="28"/><rect x="1719" y="210" width="29" height="28"/><rect x="1764" y="210" width="30" height="28"/></g>
<rect x="1405" y="211" width="10" height="10" fill="#c01818"/><path d="M1406 224h26" stroke="#d01010" stroke-width="2"/>
<g stroke="#ddd" fill="none"><path d="M1378 215h10M1378 219h10M1381 212l-1 12M1385 212l-1 12"/><path d="M1438 215h10M1438 219h10M1441 212l-1 12M1445 212l-1 12"/><path d="M1468 215h10M1468 219h10M1471 212l-1 12M1475 212l-1 12"/></g>
<g font-size="14" fill="#d81010" text-anchor="middle"><text x="1388" y="237">8</text><text x="1418" y="237">16</text><text x="1448" y="237">32</text><text x="1478" y="237">64</text></g>
<g font-size="13" fill="#d81010" text-anchor="middle"><text x="1390" y="224">1</text><text x="1420" y="222">1</text><text x="1450" y="224">1</text><text x="1480" y="224">1</text><text x="1360" y="224">1</text><text x="1360" y="236">4</text></g>
<ellipse cx="1519" cy="218" rx="6" ry="3.500" fill="#30b060"/><path d="M1521 233l5-5 5 4" fill="none" stroke="#eee"/><circle cx="1521" cy="233" r="2" fill="none" stroke="#eee"/><circle cx="1526" cy="228" r="2" fill="none" stroke="#eee"/><circle cx="1531" cy="232" r="2" fill="none" stroke="#eee"/>
<ellipse cx="1549" cy="218" rx="6" ry="3.500" fill="#30b060"/><text x="1546" y="231" font-size="9" fill="#ddd">abc</text><path d="M1563 223v8" stroke="#ddd"/><circle cx="1561" cy="231" r="2" fill="#ddd"/><text x="1551" y="237" font-size="6" fill="#777">× ×</text>
<text x="1572" y="222" font-size="9" fill="#ddd">VOL</text><path d="M1581 234l5-5 5 4" fill="none" stroke="#ddd"/><circle cx="1581" cy="234" r="2" fill="none" stroke="#ddd"/><circle cx="1586" cy="229" r="2" fill="none" stroke="#ddd"/><circle cx="1591" cy="233" r="2" fill="none" stroke="#ddd"/>
<path d="M1616 211l2 4 5-2-1 5 5 1-4 3 2 5-5-2-3 4-2-5-5 1 2-5-4-3 5-1-1-5 5 2z" fill="#d02020"/><circle cx="1607" cy="231" r="6.500" fill="#ddd"/><circle cx="1605" cy="230" r="1.500" fill="#333"/><circle cx="1609" cy="233" r="1.500" fill="#333"/>
<ellipse cx="1640" cy="218" rx="6" ry="3.500" fill="#30b060"/><path d="M1642 233l5-5 5 4" fill="none" stroke="#ddd"/><circle cx="1642" cy="233" r="2" fill="none" stroke="#ddd"/><circle cx="1647" cy="228" r="2" fill="none" stroke="#ddd"/><circle cx="1652" cy="232" r="2" fill="none" stroke="#ddd"/>
<path d="M1663 235l3-12 8-2 6 5 5 2v5z" fill="#20c060"/><path d="M1663 220q10-8 22 0M1663 236l22-4" fill="none" stroke="#eee" stroke-width="1.500"/>
<g fill="#20c060"><rect x="1693" y="219" width="4" height="15"/><rect x="1700" y="227" width="4" height="7"/><rect x="1707" y="229" width="4" height="5"/></g><path d="M1692 214h26" stroke="#ddd" stroke-dasharray="1.500 1.500"/><path d="M1702 220v6M1710 220v6" stroke="#eee" stroke-width="2"/>
<path d="M1724 232h9V218h11" fill="none" stroke="#eee" stroke-width="2"/>
<g fill="#6a7a7a"><rect x="1769" y="214" width="20" height="3"/><rect x="1769" y="218" width="20" height="3"/><rect x="1769" y="227" width="20" height="3"/><rect x="1769" y="231" width="20" height="3"/></g><rect x="1769" y="222" width="20" height="4" fill="#30c060"/>
</svg>

<div class="a" style="left:15px;top:957px;width:280px;height:9px;overflow:hidden"><div style="font-size:13.5px;line-height:16px;color:#111;white-space:nowrap;margin-top:1px">MIDI take: DRUMS - молитва-imported.mid</div></div>

<div id="dlg">
<div class="a" style="left:472px;top:18px;width:886px;height:38px;background:#0078d7"></div>
<div class="a" style="left:482px;top:25px;font-size:16.8px;font-weight:bold;color:#e6eff8;white-space:nowrap;line-height:24px">FX: Track 14 "DRUMS"</div>
<div class="a" style="left:1332px;top:27px;width:25px;height:25px;background:#c75050;color:#fff;text-align:center;line-height:24px;font-size:15px;font-weight:bold">×</div>
<svg class="a" style="left:1312px;top:30px" width="16" height="18" viewBox="0 0 16 18"><path d="M5 2h6M6 2v6l-3 3h10l-3-3V2M8 11v6" fill="#eaf2fa" stroke="#eaf2fa"/></svg>
<div class="a" style="left:480px;top:60px;font-size:16.5px;font-weight:bold;line-height:20px;color:#111">FX</div>
<div class="a" style="left:513px;top:60px;font-size:16.5px;font-weight:bold;line-height:20px;color:#111">Edit</div>
<div class="a" style="left:559px;top:60px;font-size:16.5px;font-weight:bold;line-height:20px;color:#111">Options</div>

<div class="a" style="left:476px;top:84px;width:221px;height:357px;border:1px solid #9a9a9a"></div>
<div class="chk" style="left:484px;top:90px">✓</div>
<div class="a" style="left:501px;top:86px;width:105px;height:20px;background:#0078d7"></div>
<div class="a" style="left:503px;top:87px;font-size:13.4px;line-height:19px;color:#dceaf8;white-space:nowrap">JS: MIDI Tool v2</div>
<div class="chk" style="left:484px;top:110px">✓</div>
<div class="a" style="left:503px;top:107px;font-size:13.4px;line-height:19px;color:#222;white-space:nowrap">VSTi: SOUND Canvas VA (Ro...</div>

<div class="a" style="left:704px;top:84px;width:620px;height:26px;border:1px solid #777"></div>
<div class="bt" style="left:1331px;top:85px;width:24px;height:24px;line-height:26px">...</div>
<div class="cb" style="left:710px;top:116px;width:418px;height:24px;line-height:23px;font-size:13.6px">No preset<i></i></div>
<div class="bt" style="left:1135px;top:117px;width:22px;height:22px;line-height:20px">+</div>
<div class="bt" style="left:1163px;top:117px;width:58px;height:22px;line-height:20px;font-size:14px">Param</div>
<div class="bt" style="left:1227px;top:117px;width:72px;height:22px;line-height:20px;font-size:14px">MIDI</div>
<svg class="a" style="left:1305px;top:117px" width="22" height="22" viewBox="0 0 22 22"><circle cx="11" cy="11" r="9.500" fill="none" stroke="#999"/><path d="M12 13l1 6" stroke="#333"/></svg>
<div class="a" style="left:1334px;top:121px;width:16px;height:16px;border:1px solid #333"></div>
<svg class="a" style="left:1336px;top:123px" width="12" height="12" viewBox="0 0 12 12"><path d="M1 6l3 4 7-8" fill="none" stroke="#444" stroke-width="1.300"/></svg>

<div class="a" style="left:710px;top:152px;width:571px;height:1px;background:#bbb"></div>
<div class="a" style="left:710px;top:152px;width:1px;height:23px;background:#bbb"></div>
<div class="a" style="left:800px;top:156px;width:392px;text-align:center;line-height:17px;color:#222;white-space:nowrap">MIDI Tool v2 [IXix]</div>
<div class="bt" style="left:1289px;top:153px;width:60px;height:22px;line-height:20px">Edit...</div>

<div class="lb" style="top:181px">Input Channel</div><div class="cb" style="left:928px;top:178px;width:424px;height:24px;line-height:22px">Any<i></i></div>
<div class="lb" style="top:203px">Note Min</div><div class="kn" style="left:930px;top:203px"></div><div class="ed" style="top:202px">0.0</div>
<div class="lb" style="top:223px">Note Max</div><div class="kn" style="left:1260px;top:223px"></div><div class="ed" style="top:222px;height:18px">127.0</div>
<div class="lb" style="top:243px">Input Velocity Min</div><div class="kn" style="left:930px;top:243px"></div><div class="ed" style="top:243px">0.0</div>
<div class="lb" style="top:263px">Input Velocity Max</div><div class="kn" style="left:1260px;top:263px"></div><div class="ed" style="top:263px">127.0</div>
<div class="lb" style="top:285px">Input Velocity Mode</div><div class="cb" style="left:928px;top:282px;width:424px;height:24px;line-height:22px">Clamp To Range<i></i></div>
<div class="lb" style="top:307px">Velocity Scaling(%)</div><div class="kn" style="left:963px;top:307px"></div><div class="ed" style="top:307px">100.0</div>
<div class="lb" style="top:327px">Random Velocity (%)</div><div class="kn" style="left:930px;top:327px"></div><div class="ed" style="top:327px">0.0</div>
<div class="lb" style="top:347px">Output Velocity Min</div><div class="kn" style="left:930px;top:347px"></div><div class="ed" style="top:347px">0.0</div>
<div class="lb" style="top:367px">Output Velocity Max</div><div class="kn" style="left:1260px;top:367px"></div><div class="ed" style="top:367px">127.0</div>
<div class="lb" style="top:387px">Transpose (semitones)</div><div class="kn" style="left:1095px;top:387px"></div><div class="ed" style="top:387px">0.0</div>
<div class="lb" style="top:407px">Random Pitch (%)</div><div class="kn" style="left:930px;top:407px"></div><div class="ed" style="top:407px">0.0</div>
<div class="lb" style="top:429px">Pitch Reset</div><div class="cb" style="left:928px;top:426px;width:424px;height:24px;line-height:22px;border:1px solid #0078d7">Yes<i></i></div>
<div class="lb" style="top:453px">Output Channel</div><div class="cb" style="left:928px;top:450px;width:424px;height:24px;line-height:22px">10<i></i></div>
<div class="lb" style="top:477px">Controller Routing</div><div class="cb" style="left:928px;top:474px;width:424px;height:24px;line-height:22px">Original<i></i></div>

<div class="bt" style="left:477px;top:446px;width:58px;height:26px;line-height:23px">Add</div>
<div class="bt" style="left:541px;top:446px;width:64px;height:26px;line-height:23px">Remove</div>
<div class="a" style="left:476px;top:477px;line-height:17px;color:#222;white-space:nowrap">0.0%/0.2% CPU 0/0 spls</div>
<svg class="a" style="left:961px;top:431px" width="14" height="19" viewBox="0 0 14 19"><path d="M1.500 1v14l3.500-3 2.500 6 2.500-1-2.500-6h5z" fill="#e8e8ee" stroke="#303050"/></svg>
</div>

<div class="t" style="left:195px">Grid:</div>
<div class="s b" style="left:231px;width:72px">1/16<i></i></div>
<div class="s" style="left:308px;width:78px">straight<i></i></div>
<div class="t" style="left:397px">Notes:</div>
<div class="s b" style="left:445px;width:72px">Grid<i></i></div>
<div class="a" style="left:532px;top:933px;width:15px;height:15px;background:#e2e2e2;border-left:1px solid #555;border-top:1px solid #555"></div>
<div class="t" style="left:552px">Key snap</div>
<div class="t" style="left:629px">Color:</div>
<div class="s" style="left:674px;width:108px">Velocity<i></i></div>
<div class="s" style="left:1586px;width:116px">DRUMS<i></i></div>
<div class="s" style="left:1708px;width:116px">Channel 10<i></i></div>
<div class="chk" style="left:1834px;top:933px;width:15px;height:15px;border:0;border-left:1px solid #555;border-top:1px solid #555;line-height:14px;font-size:13px">✓</div>
<div class="t" style="left:1855px;color:#222">Filter</div>
</body></html>
